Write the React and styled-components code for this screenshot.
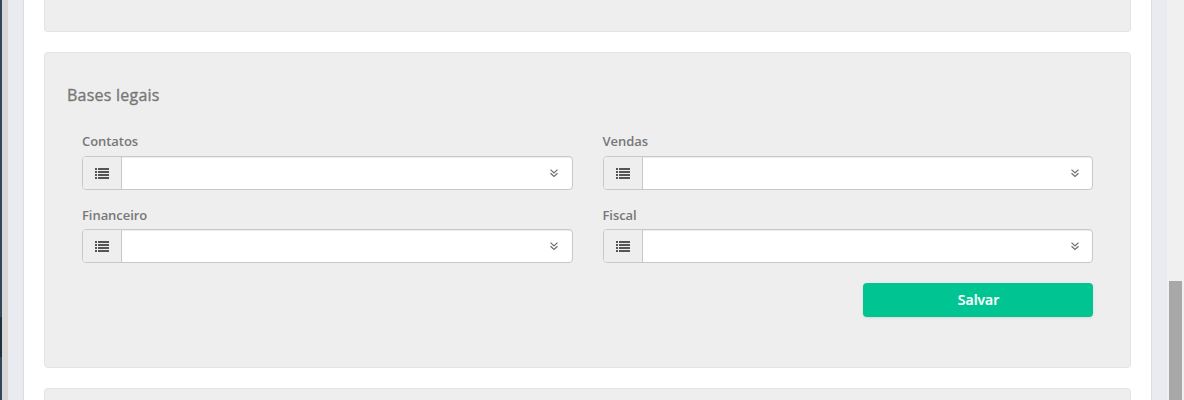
import React from "react";
import styled, { createGlobalStyle } from "styled-components";

const GlobalStyle = createGlobalStyle`
  * { box-sizing: border-box; }
  body {
    margin: 0;
    background: #e9ebf0;
    font-family: "Open Sans", "Liberation Sans", sans-serif;
    font-size: 13px;
    color: #777;
    overflow: hidden;
  }
`;

const Page = styled.div`
  display: flex;
  height: 400px;
  width: 1184px;
  overflow: hidden;
`;

const Sidebar = styled.div`
  width: 8px;
  border-right: 6px solid #dad7d5;
  background: linear-gradient(#30485b 0 317px, #1f323f 317px 357px, #30485b 357px);
`;

const Main = styled.main`
  flex: 1;
  padding: 0 15px;
  background: #e9ebf0;
`;

const Content = styled.div`
  display: flex;
  flex-direction: column;
  gap: 20px;
  height: 400px;
  padding: 0 20px;
  overflow: hidden;
  background: #fff;
  border: solid #dcdde1;
  border-width: 0 1px;
`;

const Well = styled.section`
  flex: none;
  height: ${(p) => p.$height}px;
  padding: 0 22px;
  background: #eee;
  border: 1px solid #e3e3e3;
  border-top-width: ${(p) => (p.$cut ? 0 : 1)}px;
  border-radius: ${(p) => (p.$cut ? "0 0 4px 4px" : "4px")};
`;

const Title = styled.h4`
  margin: 0;
  padding-top: 31px;
  font-size: 16px;
  font-weight: 400;
  line-height: 22px;
  letter-spacing: 0.23px;
  -webkit-text-stroke: 0.35px currentColor;
`;

const Form = styled.form`
  display: grid;
  grid-template-columns: 490.5px 490.5px;
  column-gap: 30px;
  padding: 26px 15px 0;
`;

const Field = styled.div`
  height: ${(p) => p.$height}px;
`;

const Label = styled.label`
  display: block;
  height: 24px;
  font-weight: 600;
  line-height: 19px;
  letter-spacing: -0.06px;
`;

const InputGroup = styled.div`
  display: flex;
  height: 34px;
  margin-top: ${(p) => p.$shift}px;
  background: #fff;
  border: 1px solid #c8c8c8;
  border-radius: 4px;
  overflow: hidden;
`;

const Addon = styled.span`
  display: flex;
  align-items: center;
  width: 38px;
  padding-left: 12px;
  background: #eee;
  color: #555;
`;

const Select = styled.div`
  display: flex;
  flex: 1;
  align-items: center;
  justify-content: flex-end;
  padding-right: 12.5px;
  border-left: 1px solid #c8c8c8;
  box-shadow: inset 0 1px 1px rgba(0, 0, 0, 0.075);
`;

const SaveButton = styled.button`
  grid-column: 2;
  justify-self: end;
  width: 230px;
  height: 34px;
  padding: 0 0 0 1px;
  background: #00c593;
  border: 0;
  border-radius: 4px;
  box-shadow: 0 1px 3px rgba(0, 0, 0, 0.1);
  color: #fff;
  font: 600 14px/34px "Open Sans", "Liberation Sans", sans-serif;
  -webkit-text-stroke: 0.2px currentColor;
`;

const Scrollbar = styled.div`
  width: 17px;
  padding: 281px 2px 0;
  background: #f0f0f0;
`;

const Thumb = styled.div`
  height: 119px;
  background: #a8a8a8;
`;

const ListIcon = () => (
  <svg width="15" height="12" viewBox="0 0 15 12" fill="currentColor" shapeRendering="crispEdges">
    {[1, 4, 7, 10].map((y) => (
      <React.Fragment key={y}>
        <rect x="0" y={y} width="2" height="2" />
        <rect x="3" y={y} width="11" height="2" />
      </React.Fragment>
    ))}
  </svg>
);

const DoubleChevron = () => (
  <svg width="10" height="10" viewBox="0 0 10 10" fill="none" stroke="#6d6d6d" strokeWidth="1.2">
    <path d="M1.5 1.6 5 4.9 8.5 1.6M1.5 5.2 5 8.5 8.5 5.2" />
  </svg>
);

const FIELDS = [
  { label: "Contatos", height: 74, shift: 0 },
  { label: "Vendas", height: 74, shift: 0 },
  { label: "Financeiro", height: 77, shift: -1 },
  { label: "Fiscal", height: 77, shift: -1 },
];

export default function App() {
  return (
    <Page>
      <GlobalStyle />
      <Sidebar />
      <Main>
        <Content>
          <Well $height={32} $cut />
          <Well $height={316}>
            <Title>Bases legais</Title>
            <Form>
              {FIELDS.map(({ label, height, shift }) => (
                <Field key={label} $height={height}>
                  <Label>{label}</Label>
                  <InputGroup $shift={shift}>
                    <Addon>
                      <ListIcon />
                    </Addon>
                    <Select>
                      <DoubleChevron />
                    </Select>
                  </InputGroup>
                </Field>
              ))}
              <SaveButton type="button">Salvar</SaveButton>
            </Form>
          </Well>
          <Well $height={40} />
        </Content>
      </Main>
      <Scrollbar>
        <Thumb />
      </Scrollbar>
    </Page>
  );
}
